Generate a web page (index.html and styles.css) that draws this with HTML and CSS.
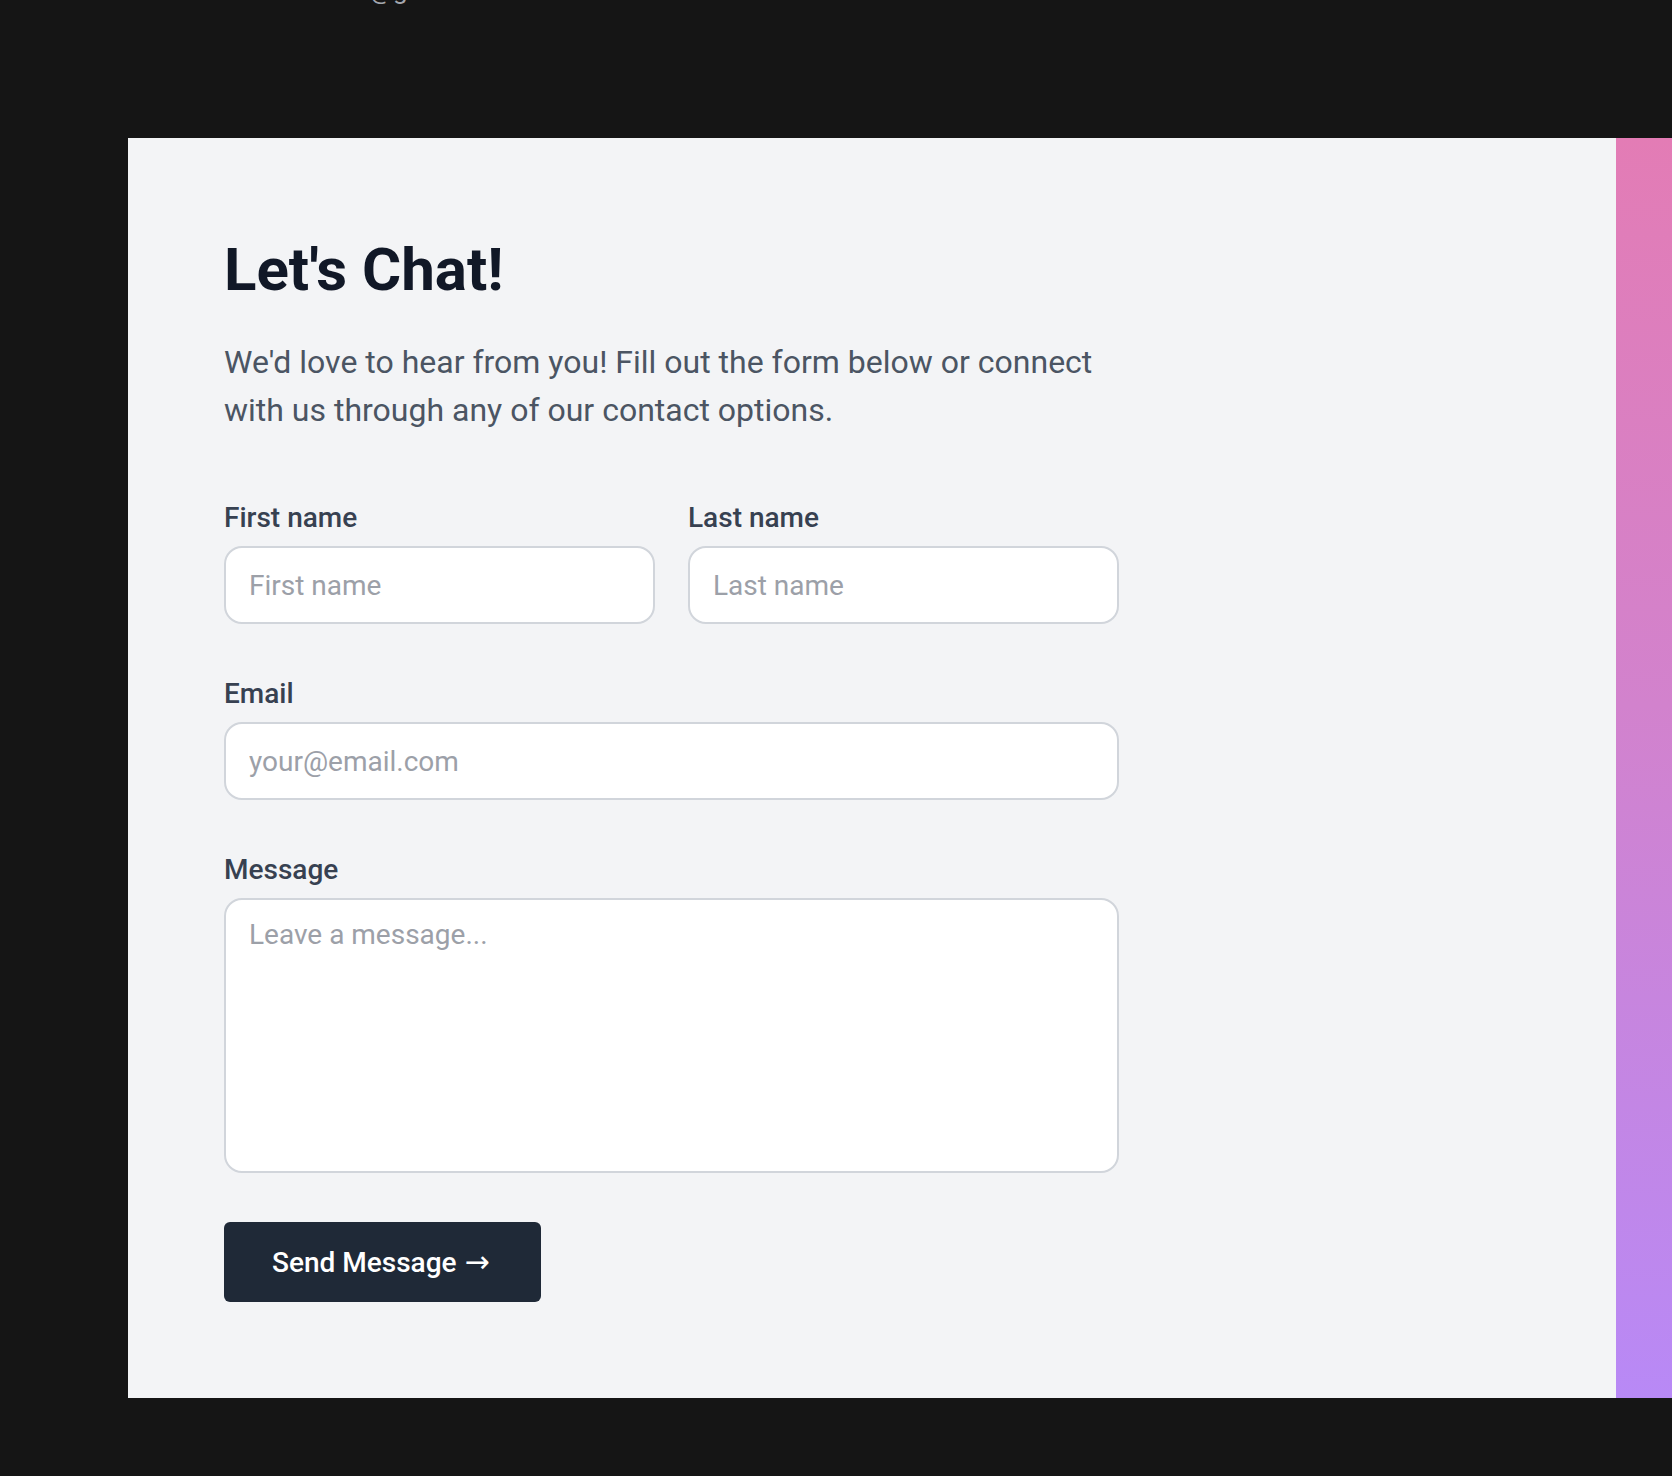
FILE: index.html
```html
<!DOCTYPE html>
<html lang="en">
<head>
<meta charset="utf-8">
<title>Let's Chat!</title>
<link rel="stylesheet" href="styles.css">
</head>
<body>
<div class="prev">
  <span class="prev-email">hello@gmail.com</span>
</div>
<section class="contact">
  <div class="card">
    <div class="form-col">
      <h1 class="title">Let's Chat!</h1>
      <p class="lead">We'd love to hear from you! Fill out the form below or connect with us through any of our contact options.</p>
      <form class="form">
        <div class="row-two">
          <div class="field">
            <label class="label" for="first">First name</label>
            <input class="input" id="first" type="text" placeholder="First name">
          </div>
          <div class="field">
            <label class="label" for="last">Last name</label>
            <input class="input" id="last" type="text" placeholder="Last name">
          </div>
        </div>
        <div class="field">
          <label class="label" for="email">Email</label>
          <input class="input" id="email" type="email" placeholder="your@email.com">
        </div>
        <div class="field">
          <label class="label" for="message">Message</label>
          <textarea class="input textarea" id="message" placeholder="Leave a message..."></textarea>
        </div>
        <div class="actions">
          <button class="btn" type="button">Send Message <span class="arrow">→</span></button>
        </div>
      </form>
    </div>
    <div class="visual"></div>
  </div>
</section>
</body>
</html>
```
FILE: styles.css
```css
* { box-sizing: border-box; }

html, body {
  margin: 0;
  padding: 0;
  background: #151515;
  overflow: hidden;
}

body {
  font-family: Roboto, "DejaVu Sans", sans-serif;
  color: #111827;
}

.prev {
  display: flex;
  align-items: flex-start;
  height: 138px;
  padding-left: 314px;
}

.prev-email {
  margin-top: -25px;
  font-size: 26px;
  line-height: 30px;
  color: #a3a6ad;
}

.contact {
  padding-left: 128px;
}

.card {
  display: grid;
  grid-template-columns: 1488px 1fr;
  background: #f3f4f6;
}

.form-col {
  padding: 96px;
}

.title {
  margin: 0;
  font-size: 60px;
  line-height: 72px;
  font-weight: 700;
  color: #111827;
}

.lead {
  margin: 32px 0 0;
  max-width: 895px;
  font-size: 32px;
  line-height: 48px;
  color: #4b5563;
}

.form {
  width: 895px;
  margin-top: 65px;
  display: flex;
  flex-direction: column;
  gap: 51px;
}

.row-two {
  display: grid;
  grid-template-columns: 1fr 1fr;
  column-gap: 33px;
}

.field {
  display: flex;
  flex-direction: column;
}

.label {
  font-size: 28px;
  line-height: 36px;
  font-weight: 500;
  color: #374151;
  padding-top: 1px;
  margin-bottom: 10px;
}

.input {
  display: block;
  width: 100%;
  height: 78px;
  padding: 0 23px;
  border: 2px solid #d1d5db;
  border-radius: 18px;
  background: #ffffff;
  font-family: Roboto, "DejaVu Sans", sans-serif;
  font-size: 28px;
  color: #111827;
  outline: none;
}

.input::placeholder {
  color: #9ca0a8;
}

.textarea {
  height: 275px;
  padding: 15px 23px;
  line-height: 40px;
  resize: none;
}

.actions {
  margin-top: -2px;
}

.btn {
  display: inline-block;
  height: 80px;
  padding: 0 51px 0 48px;
  border: none;
  border-radius: 6px;
  background: #1f2937;
  color: #ffffff;
  font-family: Roboto, "DejaVu Sans", sans-serif;
  font-size: 28px;
  font-weight: 500;
  cursor: pointer;
}

.arrow {
  margin-left: 1px;
  font-family: "DejaVu Sans", sans-serif;
  font-weight: 400;
  font-size: 30px;
  line-height: 1;
}

.visual {
  background: linear-gradient(to bottom, #e37cb5 0%, #d282cd 45%, #b889f6 100%);
}
```
